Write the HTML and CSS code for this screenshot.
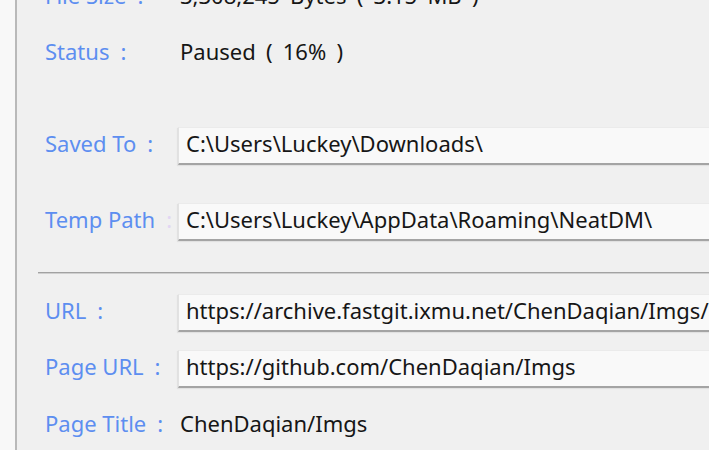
FILE: index.html
```html
<!DOCTYPE html>
<html>
<head>
<meta charset="utf-8">
<link rel="stylesheet" href="styles.css">
</head>
<body>
<div class="window">
  <div class="side"></div>
  <div class="panel">
    <div class="row row-first">
      <div class="label">File Size<span class="colon">:</span></div>
      <div class="value">3,308,245 Bytes ( 3.15 MB )</div>
    </div>
    <div class="row row-status">
      <div class="label">Status<span class="colon">:</span></div>
      <div class="value">Paused ( 16% )</div>
    </div>
    <div class="row row-field row-saved">
      <div class="label">Saved To<span class="colon">:</span></div>
      <div class="field">C:\Users\Luckey\Downloads\</div>
    </div>
    <div class="row row-field row-temp">
      <div class="label">Temp Path<span class="colon faint">:</span></div>
      <div class="field">C:\Users\Luckey\AppData\Roaming\NeatDM\</div>
    </div>
    <div class="separator"></div>
    <div class="row row-field row-url">
      <div class="label">URL<span class="colon">:</span></div>
      <div class="field">https://archive.fastgit.ixmu.net/ChenDaqian/Imgs/archive/master.zip</div>
    </div>
    <div class="row row-field row-page">
      <div class="label">Page URL<span class="colon">:</span></div>
      <div class="field">https://github.com/ChenDaqian/Imgs</div>
    </div>
    <div class="row row-title">
      <div class="label">Page Title<span class="colon">:</span></div>
      <div class="value">ChenDaqian/Imgs</div>
    </div>
  </div>
</div>
</body>
</html>
```
FILE: styles.css
```css
html, body {
  margin: 0;
  padding: 0;
  width: 709px;
  height: 450px;
  overflow: hidden;
  background: #f0f0f0;
}

.window {
  display: flex;
  height: 450px;
  font-family: "Noto Sans", "DejaVu Sans", sans-serif;
  font-size: 22px;
  word-spacing: 4.5px;
  color: #161616;
}

.side {
  width: 15px;
  flex: none;
  background: #f8f8f8;
  border-right: 2px solid #b9b9b9;
}

.panel {
  flex: 1;
  min-width: 0;
  overflow: hidden;
  background: #f0f0f0;
  padding-left: 28px;
  display: flex;
  flex-direction: column;
}

.row {
  display: flex;
  align-items: flex-start;
  height: 38px;
  flex: none;
  white-space: nowrap;
}

.row-first { margin-top: -24px; }
.row-status { margin-top: 18px; }
.row-saved { margin-top: 57px; }
.row-temp { margin-top: 38px; }
.separator {
  flex: none;
  margin-top: 31px;
  margin-left: -7px;
  height: 0;
  border-top: 1px solid #a2a2a2;
  border-bottom: 1px solid #cfcfcf;
}
.row-url { margin-top: 20px; }
.row-page { margin-top: 18px; }
.row-title { margin-top: 16px; }

.label {
  width: 135px;
  flex: none;
  color: #5d8ef0;
  line-height: 38px;
  word-spacing: 0;
}

.colon {
  margin-left: 11px;
}

.row-field .label {
  line-height: 31px;
  padding-top: 1px;
}

.faint { color: #e2d6f3; }

.value {
  line-height: 38px;
}

.field {
  margin-left: -2px;
  min-width: 560px;
  height: 31px;
  line-height: 31px;
  padding: 0 0 4px 7px;
  background: #f9f9f9;
  border-top: 1px solid #ebebeb;
  border-left: 1px solid #e2e2e2;
  border-bottom: 2px solid #a4a4a4;
  box-shadow: -1px 1px 1px rgba(0, 0, 0, 0.06);
}
```
